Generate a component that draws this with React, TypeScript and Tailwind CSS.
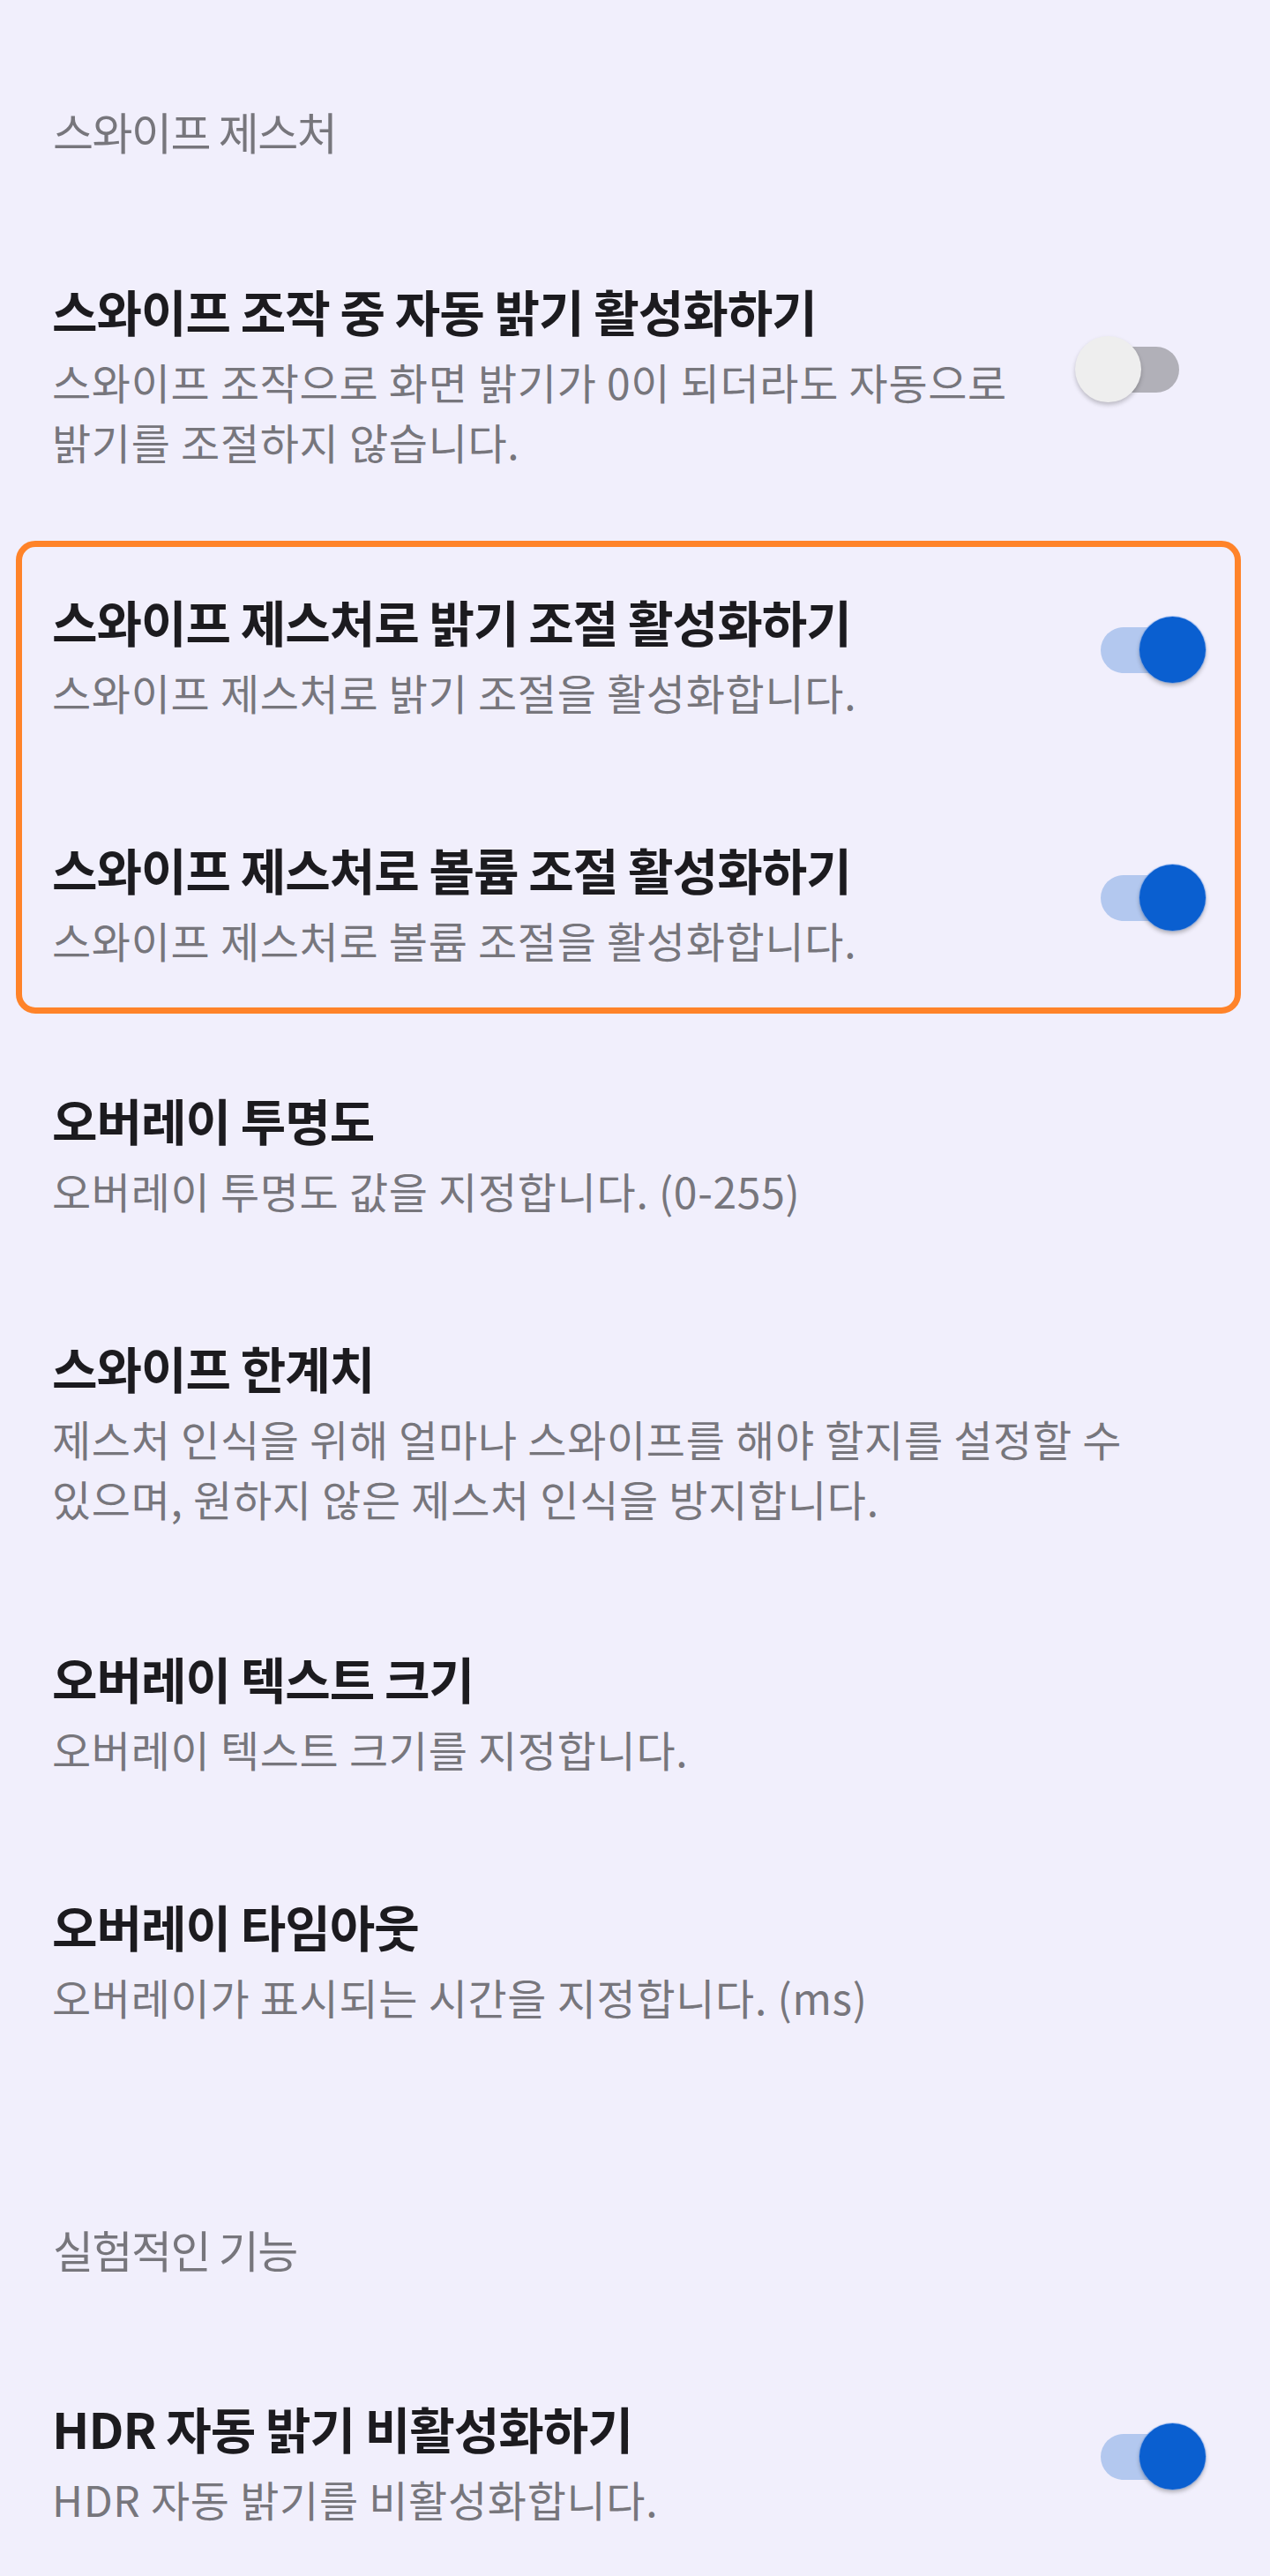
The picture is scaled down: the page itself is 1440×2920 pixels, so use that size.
import React from "react";

type RowProps = {
  title: string;
  desc: string[];
  toggle?: "on" | "off";
  inBox?: boolean;
  className?: string;
};

function Toggle({ on }: { on: boolean }) {
  return (
    <div className="relative w-[148px] h-[75px] shrink-0 mb-[14px]">
      <div
        className={
          on
            ? "absolute left-[29px] top-[12px] w-[89px] h-[52px] rounded-full bg-[#b3c8ef]"
            : "absolute left-[29px] top-[12px] w-[89px] h-[52px] rounded-full bg-[#b1b0b8]"
        }
      />
      <div
        className={
          on
            ? "absolute right-0 top-0 w-[75px] h-[75px] rounded-full bg-[#0a5fd0] shadow-[0_3px_5px_rgba(0,0,0,0.28)] ring-1 ring-[#4d8ff0]/40"
            : "absolute left-0 top-0 w-[75px] h-[75px] rounded-full bg-[#eeeeee] shadow-[0_3px_5px_rgba(0,0,0,0.22)]"
        }
      />
    </div>
  );
}

function Row({ title, desc, toggle, inBox, className }: RowProps) {
  return (
    <div
      className={
        (inBox ? "pl-[34px] pr-[33px] " : "pl-[59px] pr-[73px] ") +
        "flex items-center " +
        (className ?? "")
      }
    >
      <div className="flex-1 min-w-0">
        <div className="text-[56px] leading-[72px] tracking-[-1px] font-semibold text-[#1c1b1f] whitespace-nowrap">
          {title}
        </div>
        <div className="mt-[10px] text-[48px] leading-[68px] tracking-[0.7px] text-[#77767c]">
          {desc.map((d, i) => (
            <div key={i} className="whitespace-nowrap">
              {d}
            </div>
          ))}
        </div>
      </div>
      {toggle && <Toggle on={toggle === "on"} />}
    </div>
  );
}

function Header({ text, className }: { text: string; className?: string }) {
  return (
    <div
      className={
        "pl-[60px] text-[50px] leading-[60px] tracking-[-1.5px] text-[#77767c] " +
        (className ?? "")
      }
    >
      {text}
    </div>
  );
}

export default function App() {
  return (
    <div className="w-full min-h-[2920px] bg-[#f1effc] font-['Noto_Sans_CJK_KR','Noto_Sans',sans-serif] pt-[118px] flex flex-col">
      <Header text="스와이프 제스처" />
      <Row
        className="mt-[138px]"
        title="스와이프 조작 중 자동 밝기 활성화하기"
        desc={["스와이프 조작으로 화면 밝기가 0이 되더라도 자동으로", "밝기를 조절하지 않습니다."]}
        toggle="off"
      />
      <div className="mt-[79px] ml-[18px] mr-[33px] border-[7px] border-[#ff8329] rounded-[22px] pt-[48px] pb-[43px] flex flex-col">
        <Row
          inBox
          title="스와이프 제스처로 밝기 조절 활성화하기"
          desc={["스와이프 제스처로 밝기 조절을 활성화합니다."]}
          toggle="on"
        />
        <Row
          inBox
          className="mt-[131px]"
          title="스와이프 제스처로 볼륨 조절 활성화하기"
          desc={["스와이프 제스처로 볼륨 조절을 활성화합니다."]}
          toggle="on"
        />
      </div>
      <Row
        className="mt-[84px]"
        title="오버레이 투명도"
        desc={["오버레이 투명도 값을 지정합니다. (0-255)"]}
      />
      <Row
        className="mt-[131px]"
        title="스와이프 한계치"
        desc={[
          "제스처 인식을 위해 얼마나 스와이프를 해야 할지를 설정할 수",
          "있으며, 원하지 않은 제스처 인식을 방지합니다.",
        ]}
      />
      <Row
        className="mt-[134px]"
        title="오버레이 텍스트 크기"
        desc={["오버레이 텍스트 크기를 지정합니다."]}
      />
      <Row
        className="mt-[131px]"
        title="오버레이 타임아웃"
        desc={["오버레이가 표시되는 시간을 지정합니다. (ms)"]}
      />
      <Header className="mt-[222px]" text="실험적인 기능" />
      <Row
        className="mt-[137px]"
        title="HDR 자동 밝기 비활성화하기"
        desc={["HDR 자동 밝기를 비활성화합니다."]}
        toggle="on"
      />
    </div>
  );
}
